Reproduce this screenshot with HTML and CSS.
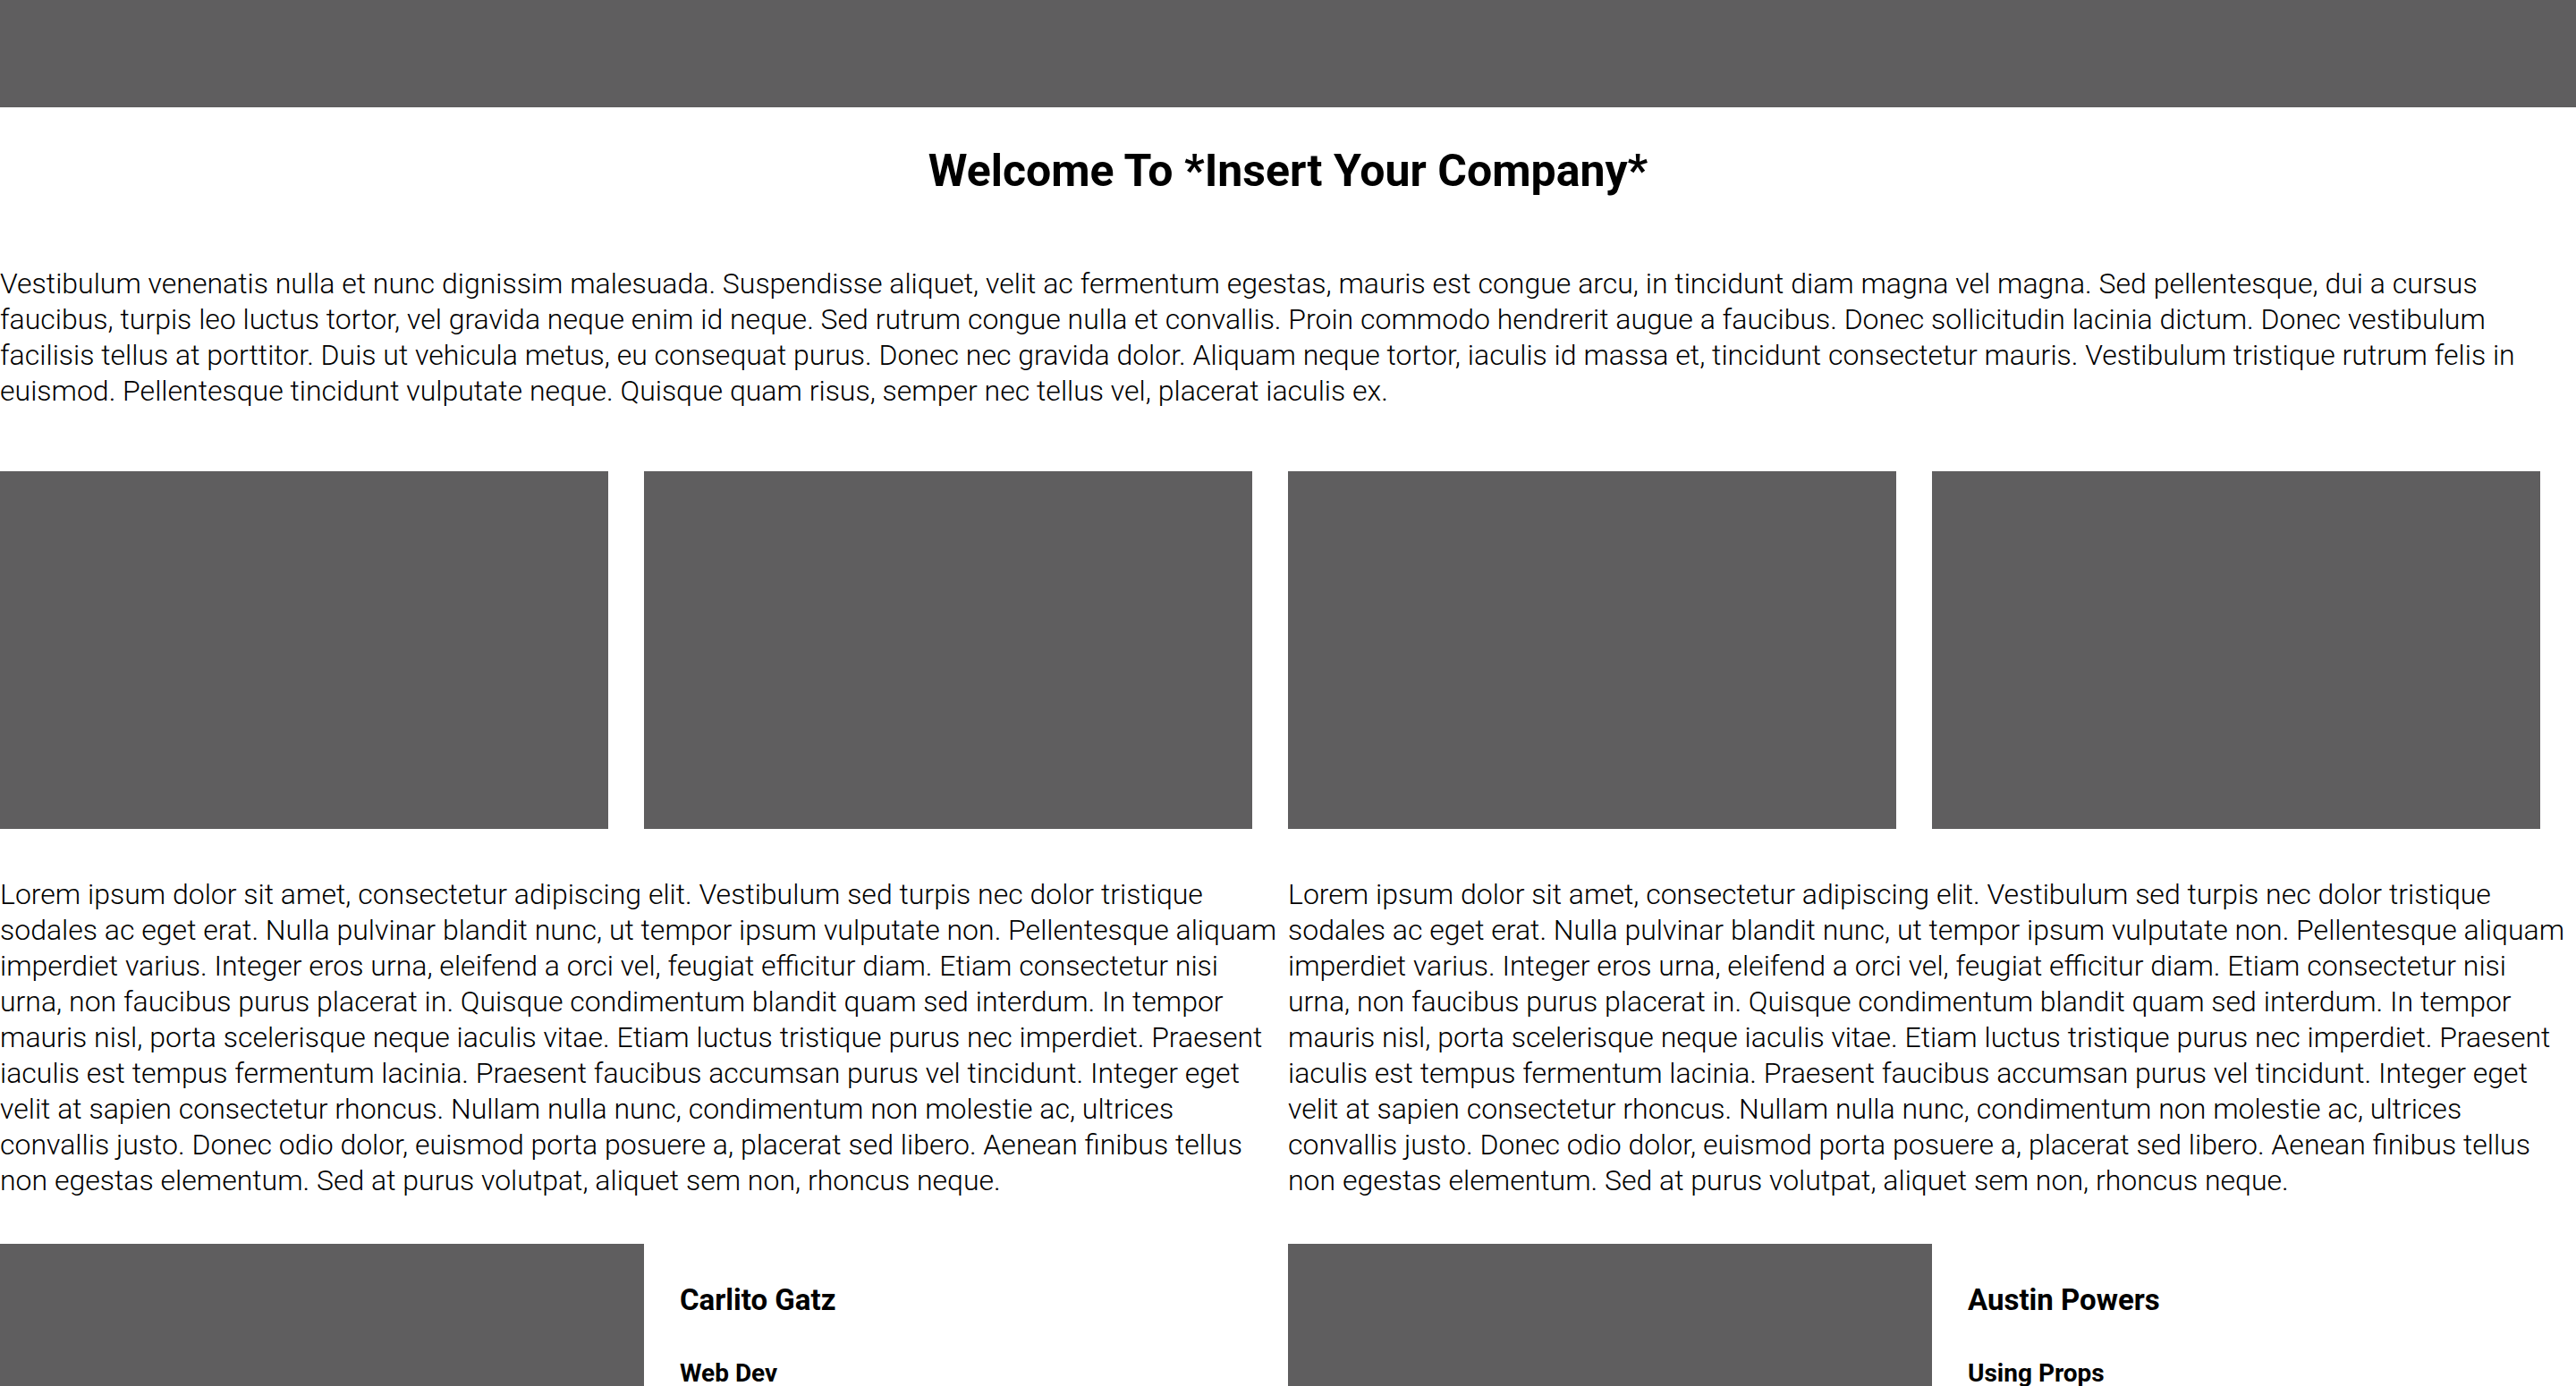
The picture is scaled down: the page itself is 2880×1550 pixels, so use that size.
FILE: index.html
```html
<!DOCTYPE html>
<html lang="en">
<head>
<meta charset="utf-8">
<title>Welcome</title>
<link rel="stylesheet" href="styles.css">
</head>
<body>
<header class="topbar"></header>
<main class="page">
  <h1 class="title">Welcome To *Insert Your Company*</h1>
  <p class="intro">Vestibulum venenatis nulla et nunc dignissim malesuada. Suspendisse aliquet, velit ac fermentum egestas, mauris est congue arcu, in tincidunt diam magna vel magna. Sed pellentesque, dui a cursus faucibus, turpis leo luctus tortor, vel gravida neque enim id neque. Sed rutrum congue nulla et convallis. Proin commodo hendrerit augue a faucibus. Donec sollicitudin lacinia dictum. Donec vestibulum facilisis tellus at porttitor. Duis ut vehicula metus, eu consequat purus. Donec nec gravida dolor. Aliquam neque tortor, iaculis id massa et, tincidunt consectetur mauris. Vestibulum tristique rutrum felis in euismod. Pellentesque tincidunt vulputate neque. Quisque quam risus, semper nec tellus vel, placerat iaculis ex.</p>
  <section class="gallery">
    <div class="tile"></div>
    <div class="tile"></div>
    <div class="tile"></div>
    <div class="tile"></div>
  </section>
  <section class="columns">
    <p class="col-text">Lorem ipsum dolor sit amet, consectetur adipiscing elit. Vestibulum sed turpis nec dolor tristique sodales ac eget erat. Nulla pulvinar blandit nunc, ut tempor ipsum vulputate non. Pellentesque aliquam imperdiet varius. Integer eros urna, eleifend a orci vel, feugiat efficitur diam. Etiam consectetur nisi urna, non faucibus purus placerat in. Quisque condimentum blandit quam sed interdum. In tempor mauris nisl, porta scelerisque neque iaculis vitae. Etiam luctus tristique purus nec imperdiet. Praesent iaculis est tempus fermentum lacinia. Praesent faucibus accumsan purus vel tincidunt. Integer eget velit at sapien consectetur rhoncus. Nullam nulla nunc, condimentum non molestie ac, ultrices convallis justo. Donec odio dolor, euismod porta posuere a, placerat sed libero. Aenean finibus tellus non egestas elementum. Sed at purus volutpat, aliquet sem non, rhoncus neque.</p>
    <p class="col-text">Lorem ipsum dolor sit amet, consectetur adipiscing elit. Vestibulum sed turpis nec dolor tristique sodales ac eget erat. Nulla pulvinar blandit nunc, ut tempor ipsum vulputate non. Pellentesque aliquam imperdiet varius. Integer eros urna, eleifend a orci vel, feugiat efficitur diam. Etiam consectetur nisi urna, non faucibus purus placerat in. Quisque condimentum blandit quam sed interdum. In tempor mauris nisl, porta scelerisque neque iaculis vitae. Etiam luctus tristique purus nec imperdiet. Praesent iaculis est tempus fermentum lacinia. Praesent faucibus accumsan purus vel tincidunt. Integer eget velit at sapien consectetur rhoncus. Nullam nulla nunc, condimentum non molestie ac, ultrices convallis justo. Donec odio dolor, euismod porta posuere a, placerat sed libero. Aenean finibus tellus non egestas elementum. Sed at purus volutpat, aliquet sem non, rhoncus neque.</p>
  </section>
  <section class="team">
    <article class="member">
      <div class="photo"></div>
      <div class="info">
        <h2 class="name">Carlito Gatz</h2>
        <h3 class="role">Web Dev</h3>
      </div>
    </article>
    <article class="member">
      <div class="photo"></div>
      <div class="info">
        <h2 class="name">Austin Powers</h2>
        <h3 class="role">Using Props</h3>
      </div>
    </article>
  </section>
</main>
</body>
</html>
```
FILE: styles.css
```css
* { box-sizing: border-box; }

html, body {
  margin: 0;
  padding: 0;
  background: #ffffff;
}

body {
  font-family: Roboto, "Liberation Sans", sans-serif;
  font-weight: 300;
  color: #000000;
  font-size: 32px;
  line-height: 40px;
}

.topbar {
  height: 120px;
  background: #5f5e5f;
}

.title {
  margin: 0;
  padding-top: 47px;
  font-size: 50px;
  line-height: 48px;
  font-weight: 700;
  text-align: center;
}

.intro {
  margin: 82px 0 0;
}

.gallery {
  margin-top: 70px;
  display: grid;
  grid-template-columns: repeat(4, 1fr);
}

.tile {
  height: 400px;
  margin-right: 40px;
  background: #5f5e5f;
}

.columns {
  margin-top: 53px;
  display: grid;
  grid-template-columns: 1fr 1fr;
}

.col-text {
  margin: 0;
  padding-right: 8px;
}

.team {
  margin-top: 51px;
  display: grid;
  grid-template-columns: 1fr 1fr;
}

.member {
  display: grid;
  grid-template-columns: 720px 1fr;
}

.photo {
  height: 400px;
  background: #5f5e5f;
}

.info {
  padding: 43px 40px 0;
}

.name {
  margin: 0;
  font-size: 33px;
  line-height: 40px;
  font-weight: 700;
}

.role {
  margin: 46px 0 0;
  font-size: 28px;
  line-height: 32px;
  font-weight: 700;
}
```
